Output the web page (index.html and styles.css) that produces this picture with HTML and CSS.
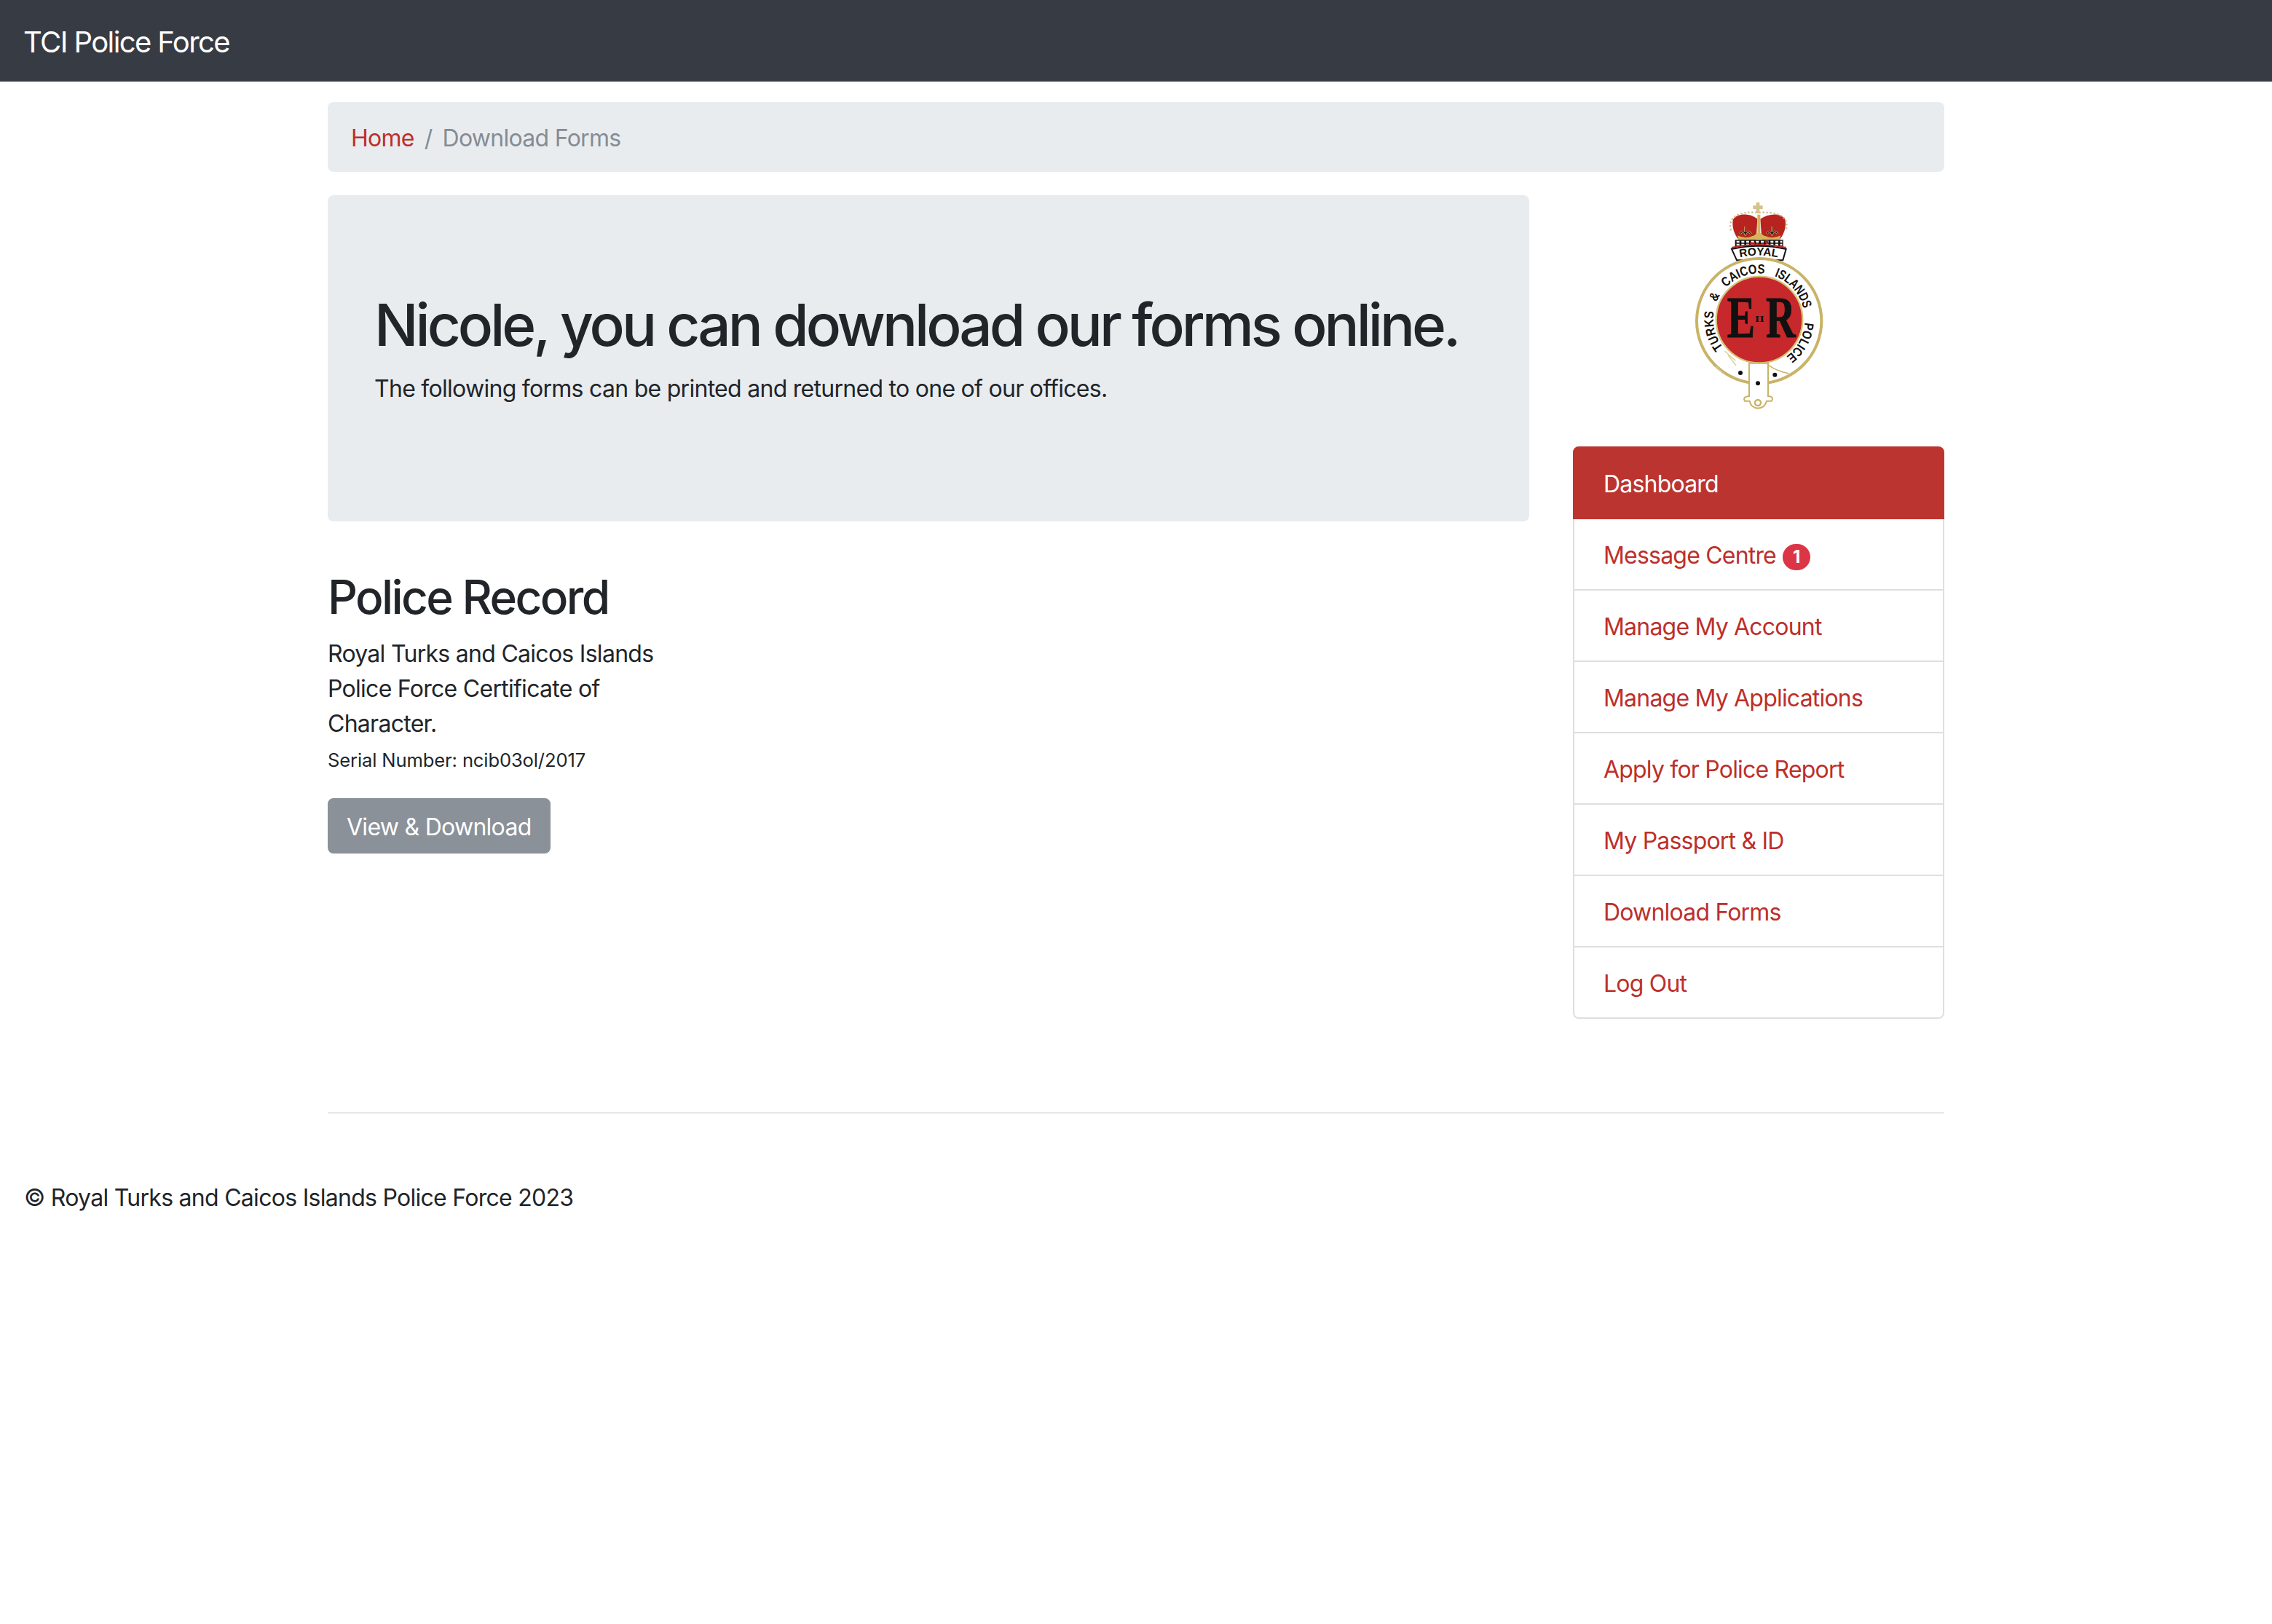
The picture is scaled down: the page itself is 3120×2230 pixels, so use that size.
FILE: index.html
```html
<!DOCTYPE html>
<html lang="en">

<head>
    <meta charset="UTF-8">
    <title>TCI Police Force</title>
    <link rel="stylesheet" href="styles.css">
</head>

<body>
    <nav class="navbar"><a class="brand" href="#">TCI Police Force</a></nav>

    <div class="container">
        <ol class="breadcrumb">
            <li><a href="#">Home</a></li>
            <li class="sep">/</li>
            <li class="active">Download Forms</li>
        </ol>

        <div class="row">
            <main class="main">
                <div class="jumbotron">
                    <h1>Nicole, you can download our forms online.</h1>
                    <p>The following forms can be printed and returned to one of our offices.</p>
                </div>

                <div class="form-card">
                    <h2>Police Record</h2>
                    <p>Royal Turks and Caicos Islands Police Force Certificate of Character.</p>
                    <small>Serial Number: ncib03ol/2017</small>
                    <a class="btn" href="#">View &amp; Download</a>
                </div>
            </main>

            <aside class="side">
                <svg class="crest" viewBox="-15 30 960 960" role="img" aria-label="Royal Turks and Caicos Islands Police crest">
                    <defs>
                        <path id="ring-a" d="M319 657A188 188 0 1 1 654 527"/>
                        <path id="ring-b" d="M655 554A188 188 0 0 1 570 700"/>
                        <path id="ribbon" d="M380 288Q465 268 552 288"/>
                    </defs>

                    <!-- crown -->
                    <path d="M462 60V104M442 80H482" stroke="#d3c48c" stroke-width="14" fill="none"/>
                    <path d="M460 128C430 102 375 104 360 130C352 160 368 198 382 212H455Z" fill="#b8231f"/>
                    <path d="M472 128C510 102 560 104 574 130C582 160 566 198 552 212H478Z" fill="#b8231f"/>
                    <path d="M460 110H472V186L492 200H440L460 186Z" fill="#d6b45a"/>
                    <path d="M378 196Q410 212 440 198H492Q525 212 556 196L552 212H382Z" fill="#d6b45a"/>
                    <path d="M350 172C340 120 380 96 462 102C550 96 592 120 578 172" fill="none" stroke="#cfc08a" stroke-width="8" stroke-linecap="round" stroke-dasharray="0 15"/>
                    <path d="M410 160V194M388 190Q402 170 410 190Q420 170 434 190" fill="none" stroke="#e0c878" stroke-width="8"/>
                    <path d="M520 160V194M498 190Q512 170 520 190Q530 170 544 190" fill="none" stroke="#e0c878" stroke-width="8"/>
                    <path d="M410 160V194M388 190Q402 170 410 190Q420 170 434 190" fill="none" stroke="#1a1a1a" stroke-width="4"/>
                    <path d="M520 160V194M498 190Q512 170 520 190Q530 170 544 190" fill="none" stroke="#1a1a1a" stroke-width="4"/>
                    <rect x="368" y="214" width="198" height="26" fill="#111"/>
                    <path d="M374 222H562M374 234H562" stroke="#fff" stroke-width="7" stroke-dasharray="12 8"/>
                    <path d="M430 228H450M490 222H505" stroke="#c4161c" stroke-width="7"/>
                    <path d="M354 252Q465 226 578 252L565 298H375Z" fill="#fff" stroke="#111" stroke-width="6"/>
                    <path d="M354 246Q465 222 578 246" fill="none" stroke="#b8231f" stroke-width="6"/>
                    <text class="crest-text crest-royal"><textPath href="#ribbon" startOffset="50%" text-anchor="middle">ROYAL</textPath></text>

                    <!-- garter -->
                    <circle cx="467" cy="548" r="257" fill="#fff" stroke="#c9b366" stroke-width="12"/>
                    <circle cx="468" cy="543" r="178" fill="#c6282b" stroke="#d6c27c" stroke-width="7"/>
                    <text class="crest-text crest-ring" textLength="157" lengthAdjust="spacingAndGlyphs"><textPath href="#ring-a" startOffset="0">TURKS</textPath></text>
                    <text class="crest-text crest-ring" textLength="33" lengthAdjust="spacingAndGlyphs"><textPath href="#ring-a" startOffset="197">&amp;</textPath></text>
                    <text class="crest-text crest-ring" textLength="175" lengthAdjust="spacingAndGlyphs"><textPath href="#ring-a" startOffset="269">CAICOS</textPath></text>
                    <text class="crest-text crest-ring" textLength="187" lengthAdjust="spacingAndGlyphs"><textPath href="#ring-a" startOffset="486">ISLANDS</textPath></text>
                    <text class="crest-text crest-ring" textLength="165" lengthAdjust="spacingAndGlyphs"><textPath href="#ring-b">POLICE</textPath></text>
                    <text class="crest-text crest-er" x="335" y="614" textLength="115" lengthAdjust="spacingAndGlyphs">E</text>
                    <text class="crest-text crest-er" x="495" y="614" textLength="122" lengthAdjust="spacingAndGlyphs">R</text>
                    <text class="crest-text crest-ii" x="449" y="551" textLength="40" lengthAdjust="spacingAndGlyphs">II</text>

                    <!-- strap and buckle -->
                    <path d="M290 735L318 765M340 690L372 732M325 672L370 712" fill="none" stroke="#d9ce9c" stroke-width="4"/>
                    <path d="M505 730Q540 755 590 765" fill="none" stroke="#c9b366" stroke-width="5"/>
                    <path d="M426 722H504V858Q530 860 518 878H498Q492 905 462 908Q432 905 428 878H408Q398 860 426 858Z" fill="#fff" stroke="#c9b366" stroke-width="6"/>
                    <circle cx="462" cy="885" r="12" fill="none" stroke="#c9b366" stroke-width="7"/>
                    <circle cx="390" cy="762" r="9" fill="#111"/>
                    <circle cx="532" cy="770" r="9" fill="#111"/>
                    <circle cx="462" cy="805" r="9" fill="#111"/>
                </svg>

                <div class="list-group">
                    <a class="list-item active" href="#">Dashboard</a>
                    <a class="list-item" href="#">Message Centre <span class="badge">1</span></a>
                    <a class="list-item" href="#">Manage My Account</a>
                    <a class="list-item" href="#">Manage My Applications</a>
                    <a class="list-item" href="#">Apply for Police Report</a>
                    <a class="list-item" href="#">My Passport &amp; ID</a>
                    <a class="list-item" href="#">Download Forms</a>
                    <a class="list-item" href="#">Log Out</a>
                </div>
            </aside>
        </div>

        <hr class="divider">
    </div>

    <footer class="footer">© Royal Turks and Caicos Islands Police Force 2023</footer>
</body>

</html>
```
FILE: styles.css
```css
* {
    box-sizing: border-box;
}

body {
    margin: 0;
    background: #fff;
    color: #212529;
    font-family: Inter, "Liberation Sans", sans-serif;
    font-size: 32px;
    line-height: 48px;
    letter-spacing: -0.72px;
}

a {
    color: #bd2f2b;
    text-decoration: none;
}

.navbar {
    height: 112px;
    padding: 28px 32px 24px;
    background: #373b43;
}

.brand {
    color: #fff;
    font-size: 40px;
    line-height: 60px;
    letter-spacing: -1.6px;
}

.container {
    width: 2220px;
    margin: 0 auto;
}

.breadcrumb {
    display: flex;
    gap: 14px;
    margin: 28px 0 32px;
    padding: 26px 32px 22px;
    list-style: none;
    background: #e9ecef;
    border-radius: 8px;
}

.breadcrumb .sep,
.breadcrumb .active {
    color: #858c94;
}

.row {
    display: flex;
    gap: 60px;
}

.main {
    width: 1650px;
}

.side {
    width: 510px;
}

.jumbotron {
    margin-bottom: 64px;
    padding: 130px 64px 126px;
    background: #e9ecef;
    border-radius: 8px;
}

.jumbotron h1 {
    margin: 0 0 16px;
    font-size: 80px;
    font-weight: 550;
    line-height: 96px;
    letter-spacing: -4px;
    white-space: nowrap;
}

.jumbotron p {
    margin: 0 0 32px;
}

.form-card {
    width: 510px;
    padding-top: 2px;
}

.form-card h2 {
    margin: 0 0 15px;
    font-size: 64px;
    font-weight: 550;
    line-height: 76.8px;
    letter-spacing: -2.65px;
}

.form-card p {
    margin: 0;
}

.form-card small {
    display: block;
    margin: 2px 0 28px;
    font-size: 25.6px;
    line-height: 48px;
    letter-spacing: -0.14px;
}

.btn {
    display: inline-block;
    padding: 14px 24px 10px;
    color: #fff;
    background: #8a9199;
    border: 2px solid #8a9199;
    border-radius: 8px;
}

.crest {
    display: block;
    width: 320px;
    height: 320px;
    margin: 0 auto 25px;
    letter-spacing: 0;
}

.crest-text {
    fill: #111;
    font-family: "Liberation Sans", sans-serif;
    font-weight: 700;
}

.crest-royal {
    font-size: 46px;
}

.crest-ring {
    font-size: 54px;
}

.crest-er {
    font-family: "Liberation Serif", serif;
    font-size: 242px;
    stroke: #111;
    stroke-width: 3px;
}

.crest-ii {
    font-family: "Liberation Serif", serif;
    font-size: 40px;
}

.list-group {
    display: flex;
    flex-direction: column;
    letter-spacing: -0.8px;
}

.list-item {
    height: 100px;
    margin-top: -2px;
    padding: 26px 40px 22px;
    background: #fff;
    border: 2px solid #dfdfdf;
}

.list-item:first-child {
    margin-top: 0;
    border-radius: 8px 8px 0 0;
}

.list-item:last-child {
    border-radius: 0 0 8px 8px;
}

.list-item.active {
    position: relative;
    color: #fff;
    background: #bc3430;
    border-color: #bc3430;
}

.badge {
    display: inline-block;
    width: 38px;
    height: 36px;
    margin-left: 1px;
    color: #fff;
    background: #dc3545;
    border-radius: 20px;
    font-size: 24px;
    font-weight: 700;
    line-height: 36px;
    letter-spacing: 0;
    text-align: center;
    vertical-align: 1px;
}

.divider {
    height: 2px;
    margin: 128px 0 0;
    background: #e6e6e6;
    border: 0;
}

.footer {
    margin-top: 92px;
    padding: 0 33px;
    color: #212529;
}
```
